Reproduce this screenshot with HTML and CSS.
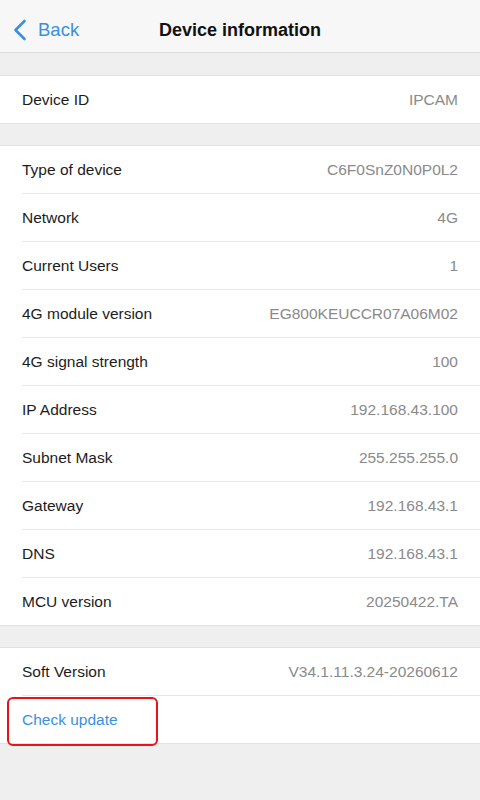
FILE: index.html
```html
<!DOCTYPE html>
<html>
<head>
<meta charset="utf-8">
<link rel="stylesheet" href="styles.css">
</head>
<body>
<div class="page">
  <header class="nav">
    <div class="back">
      <svg class="chev" width="14" height="22" viewBox="0 0 14 22"><path d="M11.5 2 L2.5 11 L11.5 20" fill="none" stroke="#3b8fe0" stroke-width="2.6" stroke-linecap="round" stroke-linejoin="round"/></svg>
      <span>Back</span>
    </div>
    <div class="title">Device information</div>
  </header>

  <div class="group">
    <div class="row"><span class="label">Device ID</span><span class="value">IPCAM</span></div>
  </div>

  <div class="group">
    <div class="row"><span class="label">Type of device</span><span class="value">C6F0SnZ0N0P0L2</span></div>
    <div class="row"><span class="label">Network</span><span class="value">4G</span></div>
    <div class="row"><span class="label">Current Users</span><span class="value">1</span></div>
    <div class="row"><span class="label">4G module version</span><span class="value">EG800KEUCCR07A06M02</span></div>
    <div class="row"><span class="label">4G signal strength</span><span class="value">100</span></div>
    <div class="row"><span class="label">IP Address</span><span class="value">192.168.43.100</span></div>
    <div class="row"><span class="label">Subnet Mask</span><span class="value">255.255.255.0</span></div>
    <div class="row"><span class="label">Gateway</span><span class="value">192.168.43.1</span></div>
    <div class="row"><span class="label">DNS</span><span class="value">192.168.43.1</span></div>
    <div class="row"><span class="label">MCU version</span><span class="value">20250422.TA</span></div>
  </div>

  <div class="group">
    <div class="row"><span class="label">Soft Version</span><span class="value">V34.1.11.3.24-20260612</span></div>
    <div class="row action"><span class="link">Check update</span><div class="highlight"></div></div>
  </div>
</div>
</body>
</html>
```

FILE: styles.css
```css
html, body {
  margin: 0;
  padding: 0;
}
body {
  background: #efefef;
  font-family: "Liberation Sans", Arial, sans-serif;
  width: 480px;
  height: 800px;
  overflow: hidden;
}
.page {
  display: flex;
  flex-direction: column;
}
.nav {
  height: 53px;
  box-sizing: border-box;
  padding-top: 8px;
  background: #f7f7f7;
  border-bottom: 1px solid #dcdcdc;
  display: flex;
  align-items: center;
  justify-content: center;
  position: relative;
}
.back {
  position: absolute;
  left: 13px;
  top: 8px;
  bottom: 0;
  display: flex;
  align-items: center;
  gap: 11px;
  color: #3b8fe0;
  font-size: 18.5px;
}
.chev {
  display: block;
}
.title {
  font-size: 18px;
  font-weight: bold;
  color: #111;
}
.group {
  margin-top: 21px;
  background: #fff;
  border-top: 1px solid #e2e2e2;
  border-bottom: 1px solid #e2e2e2;
  display: flex;
  flex-direction: column;
}
.nav + .group {
  margin-top: 22px;
}
.row {
  height: 47px;
  margin-left: 22px;
  padding-right: 22px;
  display: flex;
  align-items: center;
  justify-content: space-between;
  border-bottom: 1px solid #e8e8e8;
  font-size: 15.5px;
  position: relative;
}
.row:last-child {
  border-bottom: none;
}
.label {
  color: #1c1c1c;
}
.value {
  color: #8a8a8a;
}
.link {
  color: #3b8fe0;
}
.highlight {
  position: absolute;
  left: -15px;
  top: 1px;
  width: 147px;
  height: 45px;
  border: 2px solid #e8121b;
  border-radius: 6px;
}
```
